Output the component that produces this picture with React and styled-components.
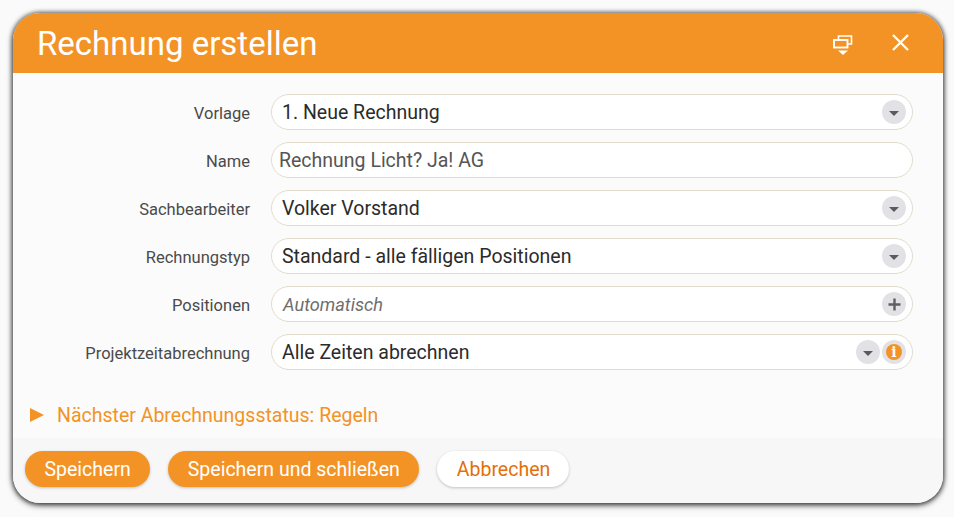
import React from "react";
import styled, { createGlobalStyle } from "styled-components";

const Global = createGlobalStyle`
  html, body { margin: 0; height: 100%; background: #fafafa; }
  body { font-family: Roboto, "Liberation Sans", sans-serif; overflow: hidden; }
`;

const Page = styled.div`
  position: relative;
  width: 954px;
  height: 517px;
  padding: 13px 11px 14px 13px;
  box-sizing: border-box;
`;

const Dialog = styled.div`
  display: flex;
  flex-direction: column;
  height: 100%;
  border-radius: 27px;
  overflow: hidden;
  background: #fbfbfb;
  box-shadow: 0 2px 6px rgba(0, 0, 0, 0.7), 0 0 4px 1px rgba(0, 0, 0, 0.45);
`;

const Header = styled.header`
  flex: 0 0 60px;
  display: flex;
  align-items: center;
  justify-content: space-between;
  padding: 0 34px 0 24px;
  background: #f39325;
  color: #fff;
`;

const Title = styled.h1`
  margin: 2px 0 0;
  font-size: 33px;
  font-weight: 400;
  line-height: 58px;
`;

const HeaderIcons = styled.div`
  display: flex;
  align-items: center;
  gap: 39px;
`;

const HeaderIcon = styled.svg`
  display: block;
  fill: none;
  stroke: #fff;
  margin-top: ${p => p.$drop}px;
`;

const Form = styled.div`
  flex: 1;
  display: flex;
  flex-direction: column;
  gap: 12px;
  padding: 21px 30px 0 0;
`;

const Row = styled.div`
  display: grid;
  grid-template-columns: 237px 1fr;
  column-gap: 21px;
  align-items: center;
`;

const Label = styled.label`
  padding-top: 2px;
  text-align: right;
  font-size: 16.5px;
  color: #4a4a4a;
`;

const Field = styled.div`
  display: flex;
  align-items: center;
  height: 36px;
  box-sizing: border-box;
  padding: 0 6px 0 ${p => p.$inset}px;
  border: 1px solid #e0dbcb;
  border-radius: 18px;
  background: #fff;
`;

const Value = styled.span`
  flex: 1;
  font-style: ${p => (p.$placeholder ? "italic" : "normal")};
  font-size: ${p => (p.$placeholder ? "18.2px" : "19.5px")};
  color: ${p => (p.$placeholder ? "#6e6e6e" : p.$muted ? "#555" : "#2b2b2b")};
`;

const FieldButtons = styled.div`
  display: flex;
  gap: 2px;
`;

const RoundButton = styled.span`
  display: flex;
  align-items: center;
  justify-content: center;
  width: 24px;
  height: 24px;
  border-radius: 50%;
  background: #e2e2e6;
`;

const Caret = styled.span`
  width: 0;
  height: 0;
  margin-top: 3px;
  border-left: 5.5px solid transparent;
  border-right: 5.5px solid transparent;
  border-top: 5.5px solid #5a5a5a;
`;

const InfoDot = styled.span`
  display: flex;
  align-items: center;
  justify-content: center;
  width: 16px;
  height: 16px;
  border-radius: 50%;
  background: #f39325;
  color: #fff;
  font: 700 14px "DejaVu Serif", serif;
`;

const Status = styled.div`
  display: flex;
  align-items: center;
  gap: 13px;
  margin-bottom: 10px;
  padding-left: 17px;
  height: 26px;
  font-size: 19.5px;
  color: #f39325;
`;

const StatusArrow = styled.span`
  width: 0;
  height: 0;
  border-top: 7.5px solid transparent;
  border-bottom: 7.5px solid transparent;
  border-left: 14px solid #f39325;
`;

const Footer = styled.footer`
  flex: 0 0 65px;
  display: flex;
  gap: 18px;
  padding: 13px 12px 0;
  box-sizing: border-box;
  background: #f7f7f7;
`;

const Button = styled.button`
  height: 36px;
  padding: 0 ${p => (p.$secondary ? 19 : 19.5)}px 0 ${p => (p.$secondary ? 19.5 : 19.5)}px;
  border: 0;
  border-radius: 18px;
  font-family: inherit;
  font-size: 19.5px;
  font-weight: 400;
  background: ${p => (p.$secondary ? "#fff" : "#f39325")};
  color: ${p => (p.$secondary ? "#e56f08" : "#fff")};
  box-shadow: 0 1px 3px rgba(0, 0, 0, 0.22);
`;

const ResizeHandle = styled.span`
  position: absolute;
  left: 930px;
  top: 489px;
  width: 24px;
  height: 24px;
  border-radius: 50%;
  background: #fbfbfb;
  box-shadow: 0 0 2px rgba(0, 0, 0, 0.12);
  z-index: -1;
`;

const fields = [
  { label: "Vorlage", value: "1. Neue Rechnung", inset: 10, caret: true },
  { label: "Name", value: "Rechnung Licht? Ja! AG", inset: 7, muted: true },
  { label: "Sachbearbeiter", value: "Volker Vorstand", inset: 10, caret: true },
  { label: "Rechnungstyp", value: "Standard - alle fälligen Positionen", inset: 10, caret: true },
  { label: "Positionen", value: "Automatisch", inset: 11, placeholder: true, plus: true },
  { label: "Projektzeitabrechnung", value: "Alle Zeiten abrechnen", inset: 10, caret: true, info: true },
];

const PlusIcon = () => (
  <svg width="13" height="13" viewBox="0 0 13 13">
    <path d="M6.5 .5v12M.5 6.5h12" stroke="#5f5f5f" strokeWidth="2.4" />
  </svg>
);

export default function App() {
  return (
    <Page>
      <Global />
      <Dialog>
        <Header>
          <Title>Rechnung erstellen</Title>
          <HeaderIcons>
            <HeaderIcon $drop={4} width="20" height="20" viewBox="0 0 20 20">
              <path d="M5.5 4V1h13v8h-4" strokeWidth="1.6" />
              <rect x="1" y="5" width="13.5" height="7.5" strokeWidth="1.9" />
              <path d="M5 15.5h10l-5 4.5z" fill="#fff" stroke="none" />
            </HeaderIcon>
            <HeaderIcon $drop={-2} width="17" height="17" viewBox="0 0 17 17">
              <path d="M1 1l15 15M16 1L1 16" strokeWidth="2.4" />
            </HeaderIcon>
          </HeaderIcons>
        </Header>
        <Form>
          {fields.map(f => (
            <Row key={f.label}>
              <Label>{f.label}</Label>
              <Field $inset={f.inset}>
                <Value $muted={f.muted} $placeholder={f.placeholder}>{f.value}</Value>
                <FieldButtons>
                  {f.caret && <RoundButton><Caret /></RoundButton>}
                  {f.plus && <RoundButton><PlusIcon /></RoundButton>}
                  {f.info && <RoundButton><InfoDot>i</InfoDot></RoundButton>}
                </FieldButtons>
              </Field>
            </Row>
          ))}
        </Form>
        <Status>
          <StatusArrow />
          Nächster Abrechnungsstatus: Regeln
        </Status>
        <Footer>
          <Button>Speichern</Button>
          <Button>Speichern und schließen</Button>
          <Button $secondary>Abbrechen</Button>
        </Footer>
      </Dialog>
      <ResizeHandle />
    </Page>
  );
}
